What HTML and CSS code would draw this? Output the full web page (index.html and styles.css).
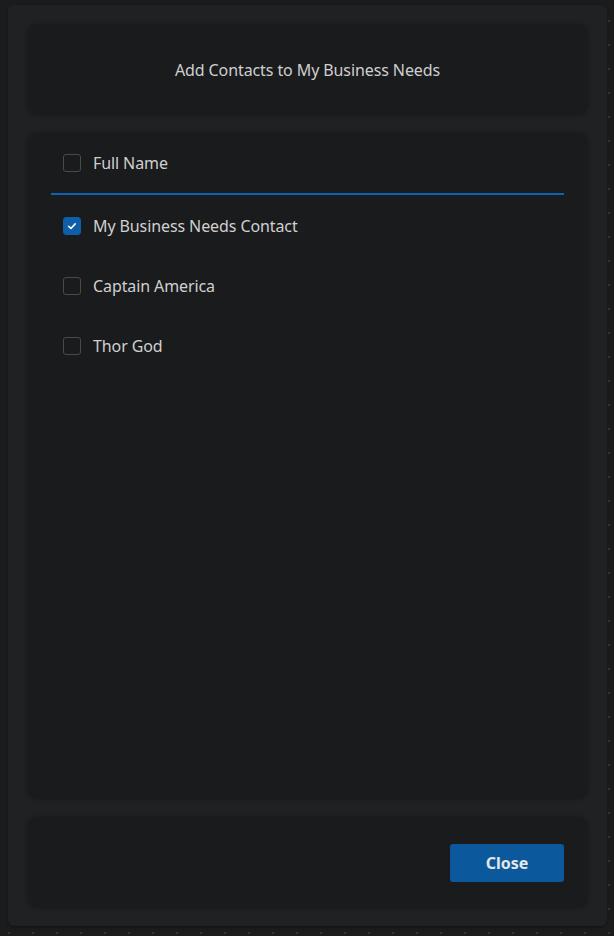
FILE: index.html
```html
<!DOCTYPE html>
<html lang="en">
<head>
<meta charset="utf-8">
<title>Add Contacts</title>
<link rel="stylesheet" href="styles.css">
</head>
<body>
<div class="dialog">
  <header class="panel head">
    <h1 class="title">Add Contacts to My Business Needs</h1>
  </header>
  <section class="panel list">
    <div class="row header-row">
      <span class="cb"></span>
      <span class="label">Full Name</span>
    </div>
    <div class="rows">
      <div class="row">
        <span class="cb checked"><svg viewBox="0 0 18 18" width="18" height="18"><path d="M5.2 9.3 L7.8 11.8 L12.6 6.6" fill="none" stroke="#ffffff" stroke-width="1.8" stroke-linecap="round" stroke-linejoin="round"/></svg></span>
        <span class="label">My Business Needs Contact</span>
      </div>
      <div class="row">
        <span class="cb"></span>
        <span class="label">Captain America</span>
      </div>
      <div class="row">
        <span class="cb"></span>
        <span class="label">Thor God</span>
      </div>
    </div>
  </section>
  <footer class="panel foot">
    <button class="btn" type="button">Close</button>
  </footer>
</div>
</body>
</html>
```
FILE: styles.css
```css
html, body {
  margin: 0;
  padding: 0;
}
body {
  background-color: #1b1c1e;
  background-image: radial-gradient(circle, #34363a 1px, transparent 1.3px);
  background-size: 24px 24px;
  background-position: -3px 9px;
  font-family: "Noto Sans", "Open Sans", sans-serif;
  color: #d0d0d0;
  padding: 5px 7px 10px 8px;
  height: 936px;
  box-sizing: border-box;
}
.dialog {
  width: 599px;
  height: 921px;
  box-sizing: border-box;
  background: #202123;
  border-radius: 6px;
  padding: 19px 19px 18px 19px;
  display: flex;
  flex-direction: column;
  gap: 18px;
  box-shadow: 0 1px 3px rgba(0,0,0,0.4);
}
.panel {
  background: #1a1b1d;
  border-radius: 10px;
  box-shadow: 0 0 4px rgba(0,0,0,0.25);
}
.head {
  height: 91px;
  display: flex;
  align-items: center;
  justify-content: center;
}
.title {
  margin: 0;
  font-size: 16px;
  font-weight: 400;
  color: #cfcfcf;
  letter-spacing: -0.1px;
}
.list {
  flex: 1;
  padding: 0 24px;
}
.row {
  height: 60px;
  display: flex;
  align-items: center;
  gap: 12px;
  padding: 0 12px;
}
.header-row {
  border-bottom: 2px solid #0a63b6;
}
.rows {
  padding-top: 1px;
}
.cb {
  width: 18px;
  height: 18px;
  box-sizing: border-box;
  border: 1.5px solid #4a4a4a;
  border-radius: 3px;
  display: flex;
  align-items: center;
  justify-content: center;
  flex: none;
}
.cb.checked {
  background: #0e5ea8;
  border-color: #0e5ea8;
}
.cb svg {
  display: block;
}
.label {
  font-size: 16px;
  color: #d0d0d0;
  letter-spacing: -0.1px;
}
.foot {
  height: 91px;
  display: flex;
  align-items: center;
  justify-content: flex-end;
  padding: 0 24px;
  box-sizing: border-box;
}
.btn {
  width: 114px;
  height: 38px;
  margin-top: 1px;
  background: #0c589d;
  border: none;
  border-radius: 3px;
  color: #e6e6e6;
  font-family: "Noto Sans", "Open Sans", sans-serif;
  font-size: 16px;
  font-weight: 700;
  cursor: pointer;
}
```
